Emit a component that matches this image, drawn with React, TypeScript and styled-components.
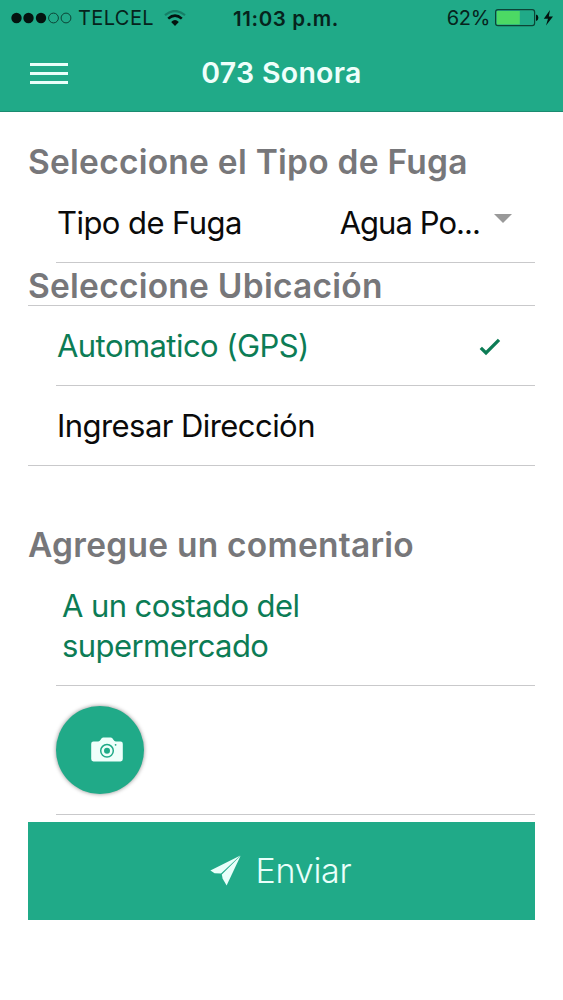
import React from 'react';
import styled, { createGlobalStyle } from 'styled-components';

const GREEN = '#20aa88';
const DARK_GREEN = '#0c7c55';
const LINE = '#c9c9cb';

const GlobalStyle = createGlobalStyle`
  * { box-sizing: border-box; }
  body { margin: 0; background: #fff; font-family: Inter, "Liberation Sans", sans-serif; }
  svg { display: block; flex: none; }
`;

const Screen = styled.div`
  width: 563px;
  height: 1000px;
  overflow: hidden;
  background: #fff;
`;

const Header = styled.header`
  height: 112px;
  background: ${GREEN};
  border-bottom: 1px solid #1b8b70;
`;

const StatusBar = styled.div`
  display: grid;
  grid-template-columns: 1fr auto 1fr;
  align-items: center;
  height: 36px;
  padding: 0 9px 0 11px;
  color: #06231c;
  font-size: 20px;
`;

const StatusGroup = styled.div<{ $end?: boolean }>`
  display: flex;
  align-items: center;
  justify-content: ${(p) => (p.$end ? 'flex-end' : 'flex-start')};
`;

const StatusText = styled.span`
  white-space: nowrap;
`;

const Clock = styled(StatusText)`
  padding-left: 7px;
  font-size: 20.5px;
  font-weight: 600;
  letter-spacing: 0.6px;
`;

const Carrier = styled(StatusText)`
  margin: 0 10px 0 6px;
  letter-spacing: 0.4px;
`;

const Charge = styled(StatusText)`
  margin-right: 5px;
  letter-spacing: -0.3px;
`;

const NavBar = styled.div`
  display: grid;
  grid-template-columns: 1fr auto 1fr;
  align-items: center;
  height: 74px;
  padding: 0 30px;
`;

const MenuButton = styled.button`
  display: flex;
  flex-direction: column;
  gap: 6px;
  width: 38px;
  padding: 0;
  border: 0;
  background: none;
`;

const MenuBar = styled.span`
  height: 3px;
  background: #e9fffa;
`;

const Title = styled.h1`
  margin: 0;
  color: #effffb;
  font-size: 28.5px;
  font-weight: 600;
  line-height: 34px;
  letter-spacing: 0.3px;
  white-space: nowrap;
`;

const Form = styled.main`
  padding: 29px 28px 0;
`;

const Heading = styled.h2<{ $top?: number; $drop?: number }>`
  margin: ${(p) => p.$top ?? 0}px 0 0;
  padding-top: ${(p) => p.$drop ?? 0}px;
  height: 42px;
  color: #77777a;
  font-size: 33.5px;
  font-weight: 600;
  line-height: 42px;
  letter-spacing: 0.25px;
  white-space: nowrap;
`;

const Group = styled.div<{ $outlined?: boolean }>`
  border: 0 solid ${LINE};
  border-width: ${(p) => (p.$outlined ? '1px 0' : '0')};
`;

const Row = styled.div<{ $last?: boolean }>`
  display: flex;
  align-items: center;
  justify-content: space-between;
  height: ${(p) => (p.$last ? 79 : 80)}px;
  margin-left: 28px;
  border-bottom: ${(p) => (p.$last ? '0' : `1px solid ${LINE}`)};
`;

const Label = styled.span<{ $active?: boolean; $spacing?: number }>`
  padding-left: 1px;
  color: ${(p) => (p.$active ? DARK_GREEN : '#0a0a0a')};
  font-size: 31px;
  line-height: 40px;
  letter-spacing: ${(p) => p.$spacing ?? -0.56}px;
  white-space: nowrap;
`;

const Value = styled.div`
  display: flex;
  align-items: center;
  gap: 14px;
  padding-right: 23px;
`;

const Caret = styled.span`
  margin-top: -8px;
  border: solid transparent;
  border-width: 9px 9px 0;
  border-top-color: #999;
`;

const CheckSlot = styled.span`
  padding: 2px 34px 0 0;
`;

const Comment = styled.p`
  height: 120px;
  margin: 0 0 0 28px;
  padding: 20px 200px 0 6px;
  border-bottom: 1px solid ${LINE};
  color: ${DARK_GREEN};
  font-size: 31px;
  line-height: 40px;
  letter-spacing: -0.58px;
`;

const PhotoRow = styled.div`
  height: 129px;
  margin-left: 28px;
  padding-top: 20px;
  border-bottom: 1px solid ${LINE};
`;

const PhotoButton = styled.button`
  display: flex;
  align-items: center;
  width: 88px;
  height: 88px;
  padding: 0 0 0 35px;
  border: 0;
  border-radius: 50%;
  background: ${GREEN};
  box-shadow: 0 0 4px rgba(0, 0, 0, 0.45);
`;

const SendButton = styled.button`
  display: flex;
  align-items: center;
  justify-content: center;
  gap: 14px;
  width: 100%;
  height: 98px;
  margin-top: 7px;
  padding: 0 1px 2px 0;
  border: 0;
  background: ${GREEN};
  color: #e9fffa;
  font-family: inherit;
  font-size: 34px;
`;

const SendLabel = styled.span`
  font-weight: 350;
  letter-spacing: -0.2px;
`;

const Signal = () => (
  <svg width="61" height="14" viewBox="0 0 61 14">
    {[5.5, 17.5, 30].map((x) => (
      <circle key={x} cx={x} cy="7" r="5.2" fill="#04130f" />
    ))}
    {[42.5, 55].map((x) => (
      <circle key={x} cx={x} cy="7" r="4.9" fill="none" stroke="#0c4436" />
    ))}
  </svg>
);

const Wifi = () => (
  <svg width="22" height="17" viewBox="0 0 22 17" fill="none">
    <path d="M1 5.2 Q11 -3.2 21 5.2" stroke="#157f66" strokeWidth="2.2" />
    <path d="M4.2 8.6 Q11 2.6 17.8 8.6" stroke="#04130f" strokeWidth="2.6" />
    <path d="M7.2 12 Q11 8.2 14.8 12 L11 16Z" fill="#04130f" />
  </svg>
);

const Battery = () => (
  <svg width="44" height="18" viewBox="0 0 44 18">
    <rect x="0.6" y="0.6" width="39" height="16" rx="2.4" fill="none" stroke="#0c4436" strokeWidth="1.2" />
    <rect x="1.8" y="2" width="23" height="13.4" fill="#4cd964" />
    <path d="M41 5.5 Q43.4 6 43.4 8.7 Q43.4 11.4 41 12Z" fill="#04130f" />
  </svg>
);

const BoltIcon = styled.svg`
  margin-left: 4px;
`;

const Bolt = () => (
  <BoltIcon width="11" height="18" viewBox="0 0 11 18">
    <path d="M7 1 L0.8 9.7 H5 L3 16.5 L10 7.4 H5.8Z" fill="#04130f" />
  </BoltIcon>
);

const Check = () => (
  <svg width="22" height="18" viewBox="0 0 22 18" fill="none">
    <path d="M1.8 9.8 L7 15 L20 1.8" stroke={DARK_GREEN} strokeWidth="3.3" />
  </svg>
);

const Camera = () => (
  <svg width="32" height="26" viewBox="0 0 32 26">
    <path
      d="M2.4 4.6 H7.2 Q8.6 4.4 9.6 2.8 Q10.8 0.6 12.2 0.6 H19.8 Q21.2 0.6 22.4 2.8 Q23.4 4.4 24.8 4.6 H29.6 Q31.8 4.6 31.8 6.8 V22 Q31.8 24.4 29.6 24.4 H2.4 Q0.2 24.4 0.2 22 V6.8 Q0.2 4.6 2.4 4.6Z"
      fill="#effffb"
    />
    <circle cx="16" cy="13.8" r="6.3" fill="none" stroke={GREEN} strokeWidth="1.5" />
    <circle cx="16" cy="13.8" r="3" fill={GREEN} />
    <circle cx="24.6" cy="7.8" r="0.9" fill={GREEN} />
  </svg>
);

const Plane = () => (
  <svg width="31" height="31" viewBox="0 0 31 31" fill="#e9fffa">
    <path d="M30.4 0.4 L0.4 15.4 L4.6 18.2 L11 18.6Z" />
    <path d="M30.6 0.8 L11.8 19.6 L12.6 23.4 L16.6 30.4Z" />
  </svg>
);

export default function App() {
  return (
    <Screen>
      <GlobalStyle />
      <Header>
        <StatusBar>
          <StatusGroup>
            <Signal />
            <Carrier>TELCEL</Carrier>
            <Wifi />
          </StatusGroup>
          <Clock>11:03 p.m.</Clock>
          <StatusGroup $end>
            <Charge>62%</Charge>
            <Battery />
            <Bolt />
          </StatusGroup>
        </StatusBar>
        <NavBar>
          <MenuButton aria-label="Menú">
            <MenuBar />
            <MenuBar />
            <MenuBar />
          </MenuButton>
          <Title>073 Sonora</Title>
        </NavBar>
      </Header>
      <Form>
        <Heading>Seleccione el Tipo de Fuga</Heading>
        <Group>
          <Row>
            <Label>Tipo de Fuga</Label>
            <Value>
              <Label $spacing={-0.95}>Agua Po...</Label>
              <Caret />
            </Value>
          </Row>
        </Group>
        <Heading $drop={2}>Seleccione Ubicación</Heading>
        <Group $outlined>
          <Row>
            <Label $active>Automatico (GPS)</Label>
            <CheckSlot>
              <Check />
            </CheckSlot>
          </Row>
          <Row $last>
            <Label>Ingresar Dirección</Label>
          </Row>
        </Group>
        <Heading $top={58}>Agregue un comentario</Heading>
        <Comment>A un costado del supermercado</Comment>
        <PhotoRow>
          <PhotoButton aria-label="Tomar foto">
            <Camera />
          </PhotoButton>
        </PhotoRow>
        <SendButton>
          <Plane />
          <SendLabel>Enviar</SendLabel>
        </SendButton>
      </Form>
    </Screen>
  );
}
